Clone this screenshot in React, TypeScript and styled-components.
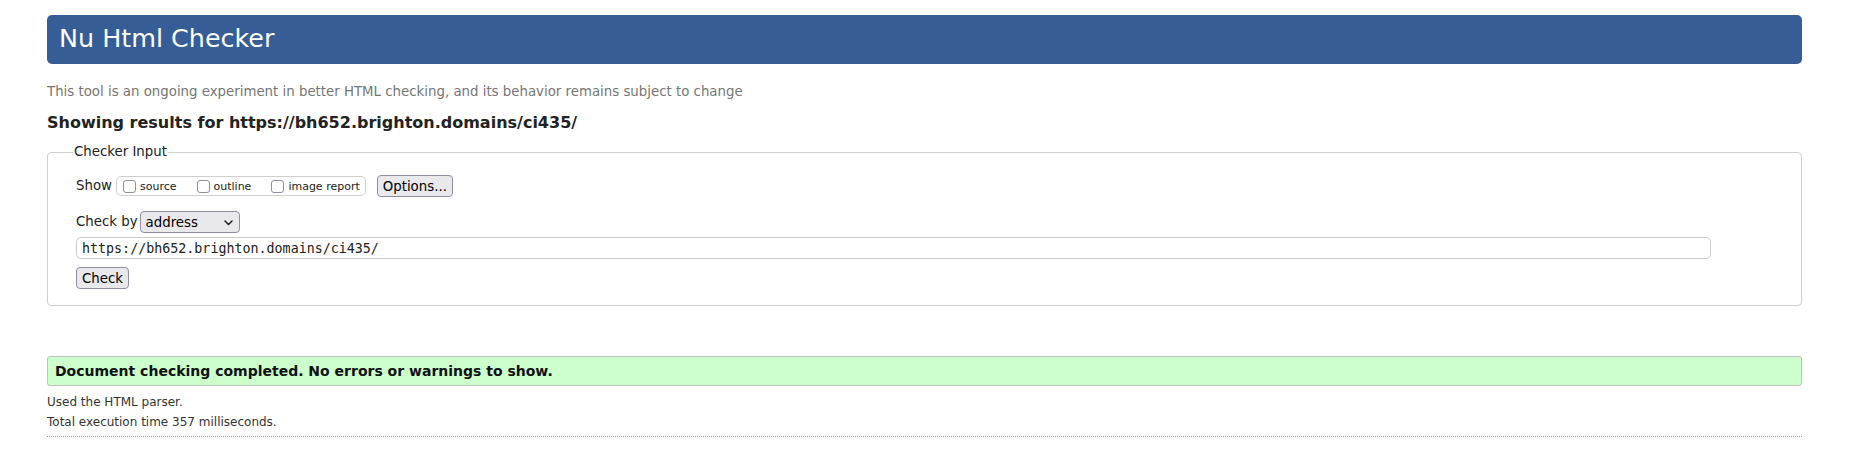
import React from "react";
import styled, { createGlobalStyle } from "styled-components";

const GlobalStyle = createGlobalStyle`
  html, body { margin: 0; padding: 0; background: #fff; }
  body { font-family: "DejaVu Sans", "Noto Sans", sans-serif; color: #222; }
  * { box-sizing: border-box; }
`;

const Page = styled.div`
  padding: 15px 47px 30px;
`;

const Header = styled.h1`
  margin: 0;
  height: 49px;
  padding: 8px 12px 11px;
  background: #365d95;
  border-radius: 5px;
  color: #fff;
  font-size: 25.4px;
  font-weight: normal;
  line-height: 30px;
`;

const Description = styled.p`
  margin: 20px 0 0;
  font-size: 13.33px;
  line-height: 16px;
  color: #767676;
`;

const Heading = styled.h2`
  margin: 13px 0 0;
  font-size: 16px;
  font-weight: bold;
  line-height: 19px;
  color: #222;
`;

const Fieldset = styled.fieldset`
  margin: 12px 0 0;
  padding: 15px 28px 16px 28px;
  border: 1px solid #cfcfcf;
  border-radius: 4px;
  min-width: 0;
`;

const Legend = styled.legend`
  font-size: 13.33px;
  line-height: 16px;
  padding: 0 1px;
  margin-left: -3px;
  color: #222;
`;

const Row = styled.div<{ $top?: number }>`
  display: flex;
  align-items: center;
  margin-top: ${(p) => p.$top ?? 0}px;
  font-size: 13.33px;
  color: #222;
`;

const Label = styled.span<{ $gap?: number }>`
  margin-right: ${(p) => p.$gap ?? 0}px;
  line-height: 16px;
`;

const Group = styled.span`
  display: inline-flex;
  align-items: center;
  gap: 20px;
  height: 20px;
  padding: 0 5px 0 6px;
  border: 1px solid #cfcfcf;
  border-radius: 5px;
`;

const Option = styled.label`
  display: inline-flex;
  align-items: center;
  gap: 4px;
  font-size: 11px;
  line-height: 13px;
  color: #222;
`;

const Box = styled.input`
  appearance: none;
  -webkit-appearance: none;
  width: 13px;
  height: 13px;
  margin: 0;
  border: 1px solid #8f8f9d;
  border-radius: 3px;
  background: #fff;
`;

const Button = styled.button<{ $left?: number }>`
  height: 22px;
  margin: 0 0 0 ${(p) => p.$left ?? 0}px;
  padding: 0 5px;
  background: #e9e9ed;
  border: 1px solid #8f8f9d;
  border-radius: 4px;
  font-family: "DejaVu Sans", sans-serif;
  font-size: 13.33px;
  color: #000;
`;

const SelectWrap = styled.span`
  position: relative;
  display: inline-block;
  height: 22px;
`;

const Select = styled.select`
  appearance: none;
  -webkit-appearance: none;
  width: 100px;
  height: 22px;
  margin: 0;
  padding: 0 0 0 5px;
  background: #e9e9ed;
  border: 1px solid #8f8f9d;
  border-radius: 4px;
  font-family: "DejaVu Sans", sans-serif;
  font-size: 13.33px;
  color: #000;
`;

const Chevron = styled.svg`
  position: absolute;
  right: 7px;
  top: 9px;
  pointer-events: none;
`;

const UrlInput = styled.input`
  width: calc(100% - 62px);
  height: 22px;
  margin: 0;
  padding: 0 5px;
  border: 1px solid #cbcbcb;
  border-radius: 5px;
  background: #fff;
  font-family: "DejaVu Sans Mono", monospace;
  font-size: 13.33px;
  color: #222;
`;

const Success = styled.p`
  margin: 50px 0 0;
  padding: 6px 7px 5px;
  background: #ccffcc;
  border: 1px solid #c2c2c2;
  border-radius: 3px;
  font-size: 14px;
  font-weight: bold;
  line-height: 17px;
  color: #111;
`;

const Details = styled.div`
  margin-top: 6px;
  padding-bottom: 4px;
  border-bottom: 1px dotted #9a9a9a;
`;

const Note = styled.p`
  margin: 0;
  font-size: 12px;
  line-height: 20px;
  color: #333;
`;

export default function App() {
  return (
    <>
      <GlobalStyle />
      <Page>
        <Header>Nu Html Checker</Header>
        <Description>
          This tool is an ongoing experiment in better HTML checking, and its behavior remains subject to change
        </Description>
        <Heading>Showing results for https://bh652.brighton.domains/ci435/</Heading>
        <Fieldset>
          <Legend>Checker Input</Legend>
          <Row>
            <Label $gap={4}>Show</Label>
            <Group>
              <Option>
                <Box type="checkbox" />
                source
              </Option>
              <Option>
                <Box type="checkbox" />
                outline
              </Option>
              <Option>
                <Box type="checkbox" />
                image report
              </Option>
            </Group>
            <Button $left={11}>Options...</Button>
          </Row>
          <Row $top={14}>
            <Label $gap={2}>Check by</Label>
            <SelectWrap>
              <Select defaultValue="address">
                <option value="address">address</option>
                <option value="file">file upload</option>
                <option value="text">text input</option>
              </Select>
              <Chevron width="9" height="6" viewBox="0 0 9 6">
                <path d="M1 1l3.5 3.5L8 1" fill="none" stroke="#222" strokeWidth="1.5" strokeLinecap="round" strokeLinejoin="round" />
              </Chevron>
            </SelectWrap>
          </Row>
          <Row $top={4}>
            <UrlInput type="url" defaultValue="https://bh652.brighton.domains/ci435/" />
          </Row>
          <Row $top={8}>
            <Button>Check</Button>
          </Row>
        </Fieldset>
        <Success>Document checking completed. No errors or warnings to show.</Success>
        <Details>
          <Note>Used the HTML parser.</Note>
          <Note>Total execution time 357 milliseconds.</Note>
        </Details>
      </Page>
    </>
  );
}
